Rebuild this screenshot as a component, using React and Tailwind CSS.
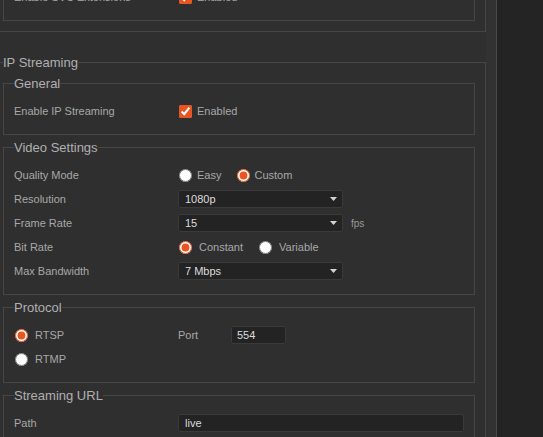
import { useState } from 'react';

const Row = ({ label, children }) => (
    <div className="flex h-[24px] items-center">
        <div className="w-[164px] shrink-0 text-[#a8a8a8]">{label}</div>
        <div className="flex flex-1 items-center">{children}</div>
    </div>
);

const Group = ({ title, children }) => (
    <fieldset className="border border-[#464646] px-[10px] pt-[8px] pb-[11px]">
        <legend className="text-[13px] leading-[15px] text-[#b0b0b0]">{title}</legend>
        {children}
    </fieldset>
);

const Check = ({ label, checked, onChange }) => (
    <label className="flex items-center text-[#a8a8a8]">
        <input
            type="checkbox"
            checked={checked}
            onChange={onChange}
            className="ml-[1px] h-[13px] w-[13px] accent-[#e95420]"
        />
        <span className="ml-[5px]">{label}</span>
    </label>
);

const Radio = ({ name, label, checked, onChange, gap = 'ml-[7px]' }) => (
    <label className="flex items-center text-[#a8a8a8]">
        <input
            type="radio"
            name={name}
            checked={checked}
            onChange={onChange}
            className="ml-[1px] h-[13px] w-[13px] accent-[#e95420]"
        />
        <span className={gap}>{label}</span>
    </label>
);

const Select = ({ value }) => (
    <div className="flex h-[18px] w-[165px] items-center justify-between rounded-[2px] border border-[#3a3a3a] bg-[#232323] pl-[6px] pr-[5px] text-[#dcdcdc]">
        <span>{value}</span>
        <svg width="7" height="4" viewBox="0 0 7 4">
            <path d="M0 0h7L3.5 4z" fill="#d4d4d4" />
        </svg>
    </div>
);

const App = () => {
    const [svc, setSvc] = useState(true);
    const [enabled, setEnabled] = useState(true);
    const [quality, setQuality] = useState('custom');
    const [bitRate, setBitRate] = useState('constant');
    const [protocol, setProtocol] = useState('rtsp');
    const [port, setPort] = useState('554');
    const [path, setPath] = useState('live');

    return (
        <div className="flex h-[437px] w-[543px] overflow-hidden bg-[#242424] font-['Liberation_Sans',Arial,sans-serif] text-[11px] leading-[13px]">
            <div className="h-full w-[486px] shrink-0 overflow-hidden bg-[#2f2f2f]">
                <div className="-ml-[8px] w-[494px]">
                    {/* tail of the section above, scrolled out of view */}
                    <div className="border-x border-b border-[#464646] px-[10px] pb-[10px]">
                        <div className="border-x border-b border-[#464646] px-[10px] pb-[11px]">
                            <div className="-mt-[15px]">
                                <Row label="Enable SVC Extensions">
                                    <Check label="Enabled" checked={svc} onChange={() => setSvc(!svc)} />
                                </Row>
                            </div>
                        </div>
                    </div>

                    <fieldset className="mt-[23px] border border-[#464646] px-[10px] pt-[6px] pb-[10px]">
                        <legend className="text-[13px] leading-[15px] text-[#b0b0b0]">IP Streaming</legend>
                        <div className="flex flex-col gap-[5px]">
                            <Group title="General">
                                <Row label="Enable IP Streaming">
                                    <Check label="Enabled" checked={enabled} onChange={() => setEnabled(!enabled)} />
                                </Row>
                            </Group>

                            <Group title="Video Settings">
                                <Row label="Quality Mode">
                                    <div className="flex items-center gap-[15px]">
                                        <Radio name="quality" label="Easy" gap="ml-[5px]" checked={quality === 'easy'} onChange={() => setQuality('easy')} />
                                        <Radio name="quality" label="Custom" gap="ml-[4px]" checked={quality === 'custom'} onChange={() => setQuality('custom')} />
                                    </div>
                                </Row>
                                <Row label="Resolution">
                                    <Select value="1080p" />
                                </Row>
                                <Row label="Frame Rate">
                                    <Select value="15" />
                                    <span className="ml-[8px] text-[10px] text-[#9a9a9a]">fps</span>
                                </Row>
                                <Row label="Bit Rate">
                                    <div className="flex items-center gap-[15px]">
                                        <Radio name="bitrate" label="Constant" checked={bitRate === 'constant'} onChange={() => setBitRate('constant')} />
                                        <Radio name="bitrate" label="Variable" checked={bitRate === 'variable'} onChange={() => setBitRate('variable')} />
                                    </div>
                                </Row>
                                <Row label="Max Bandwidth">
                                    <Select value="7 Mbps" />
                                </Row>
                            </Group>

                            <Group title="Protocol">
                                <div className="flex h-[24px] items-center">
                                    <div className="w-[164px] shrink-0">
                                        <Radio name="protocol" label="RTSP" checked={protocol === 'rtsp'} onChange={() => setProtocol('rtsp')} />
                                    </div>
                                    <span className="w-[53px] text-[#a8a8a8]">Port</span>
                                    <input
                                        value={port}
                                        onChange={(e) => setPort(e.target.value)}
                                        className="h-[18px] w-[55px] rounded-[2px] border border-[#3a3a3a] bg-[#232323] px-[5px] text-[#dcdcdc] outline-none"
                                    />
                                </div>
                                <div className="flex h-[24px] items-center">
                                    <Radio name="protocol" label="RTMP" checked={protocol === 'rtmp'} onChange={() => setProtocol('rtmp')} />
                                </div>
                            </Group>

                            <Group title="Streaming URL">
                                <Row label="Path">
                                    <input
                                        value={path}
                                        onChange={(e) => setPath(e.target.value)}
                                        className="h-[18px] flex-1 rounded-[2px] border border-[#3a3a3a] bg-[#232323] px-[6px] text-[#dcdcdc] outline-none"
                                    />
                                </Row>
                            </Group>
                        </div>
                    </fieldset>
                </div>
            </div>
            <div className="h-full w-[10px] shrink-0 bg-[#323232]" />
            <div className="h-full w-[1px] shrink-0 bg-[#4a4a4a]" />
        </div>
    );
};

export default App;
